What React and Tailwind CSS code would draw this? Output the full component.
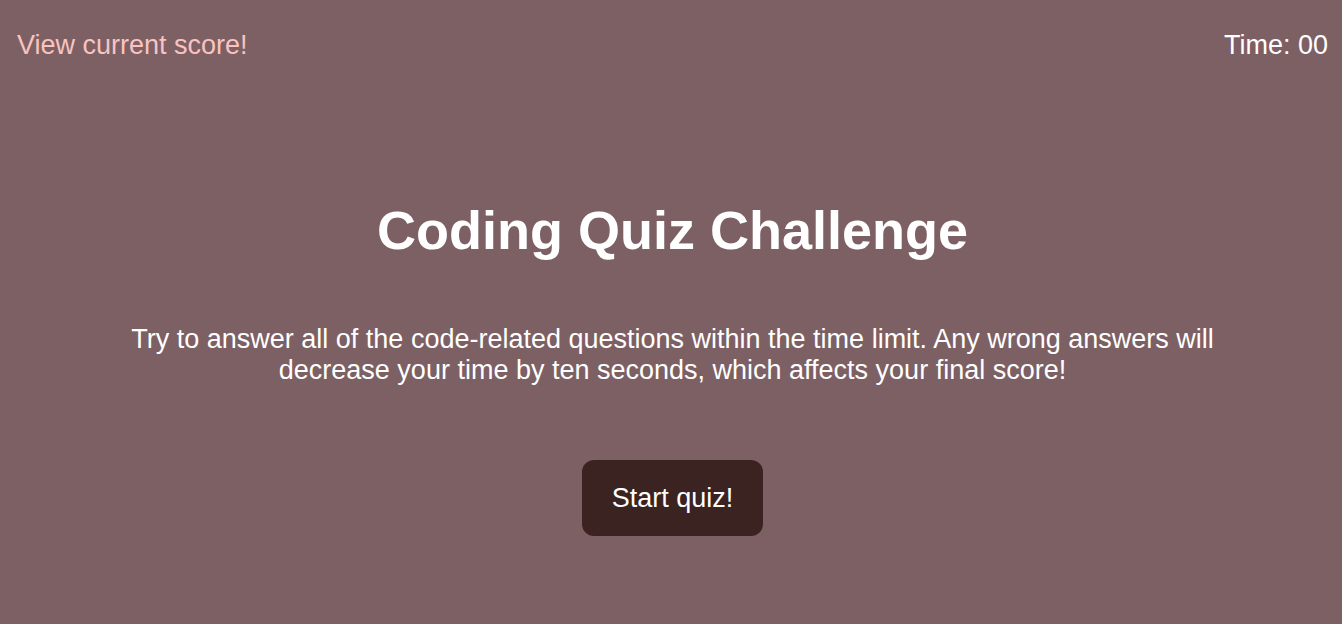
export default function App() {
  return (
    <div className="min-h-[624px] bg-[#7d6063] text-white font-['Liberation_Sans',Arial,sans-serif]">
      <header className="flex items-center justify-between pt-[30px] pl-[17px] pr-[14px]">
        <a href="#" className="text-[27px] leading-[31px] text-[#f8c3c0]">View current score!</a>
        <span className="text-[27px] leading-[31px]">Time: 00</span>
      </header>

      <main className="flex flex-col items-center text-center pl-[3px]">
        <h1 className="mt-[138px] text-[54px] leading-[62px] font-bold">Coding Quiz Challenge</h1>
        <p className="mt-[63px] w-[1100px] text-[27px] leading-[31px]">
          Try to answer all of the code-related questions within the time limit. Any wrong answers will decrease your time by ten seconds, which affects your final score!
        </p>
        <button
          type="button"
          className="mt-[74px] h-[76px] px-[30px] rounded-[12px] bg-[#3a2321] text-[27px] leading-[31px] text-white cursor-pointer"
        >
          Start quiz!
        </button>
      </main>
    </div>
  )
}
